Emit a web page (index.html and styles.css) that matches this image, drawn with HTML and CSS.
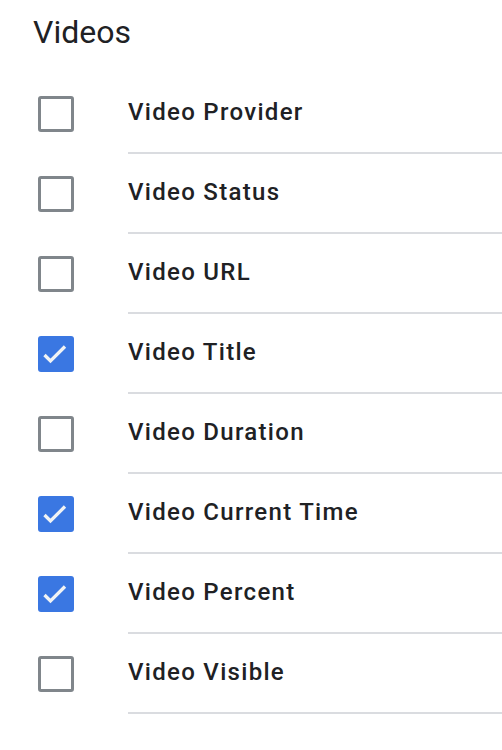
FILE: index.html
```html
<!DOCTYPE html>
<html>
<head>
<meta charset="utf-8">
<link rel="stylesheet" href="styles.css">
</head>
<body>
<div class="panel">
  <h2 class="title">Videos</h2>
  <ul class="list">
    <li class="row"><span class="cb-cell"><span class="cb"></span></span><span class="label">Video Provider</span></li>
    <li class="row"><span class="cb-cell"><span class="cb"></span></span><span class="label">Video Status</span></li>
    <li class="row"><span class="cb-cell"><span class="cb"></span></span><span class="label">Video URL</span></li>
    <li class="row"><span class="cb-cell"><span class="cb checked"><svg viewBox="0 0 36 36" width="36" height="36"><polyline points="6.5,19 12.5,25 27,10.5" fill="none" stroke="#f1f3f4" stroke-width="3.3"/></svg></span></span><span class="label">Video Title</span></li>
    <li class="row"><span class="cb-cell"><span class="cb"></span></span><span class="label">Video Duration</span></li>
    <li class="row"><span class="cb-cell"><span class="cb checked"><svg viewBox="0 0 36 36" width="36" height="36"><polyline points="6.5,19 12.5,25 27,10.5" fill="none" stroke="#f1f3f4" stroke-width="3.3"/></svg></span></span><span class="label">Video Current Time</span></li>
    <li class="row"><span class="cb-cell"><span class="cb checked"><svg viewBox="0 0 36 36" width="36" height="36"><polyline points="6.5,19 12.5,25 27,10.5" fill="none" stroke="#f1f3f4" stroke-width="3.3"/></svg></span></span><span class="label">Video Percent</span></li>
    <li class="row"><span class="cb-cell"><span class="cb"></span></span><span class="label">Video Visible</span></li>
  </ul>
</div>
</body>
</html>
```
FILE: styles.css
```css
html, body {
  margin: 0;
  padding: 0;
  background: #ffffff;
}
.panel {
  font-family: Roboto, "Liberation Sans", Arial, sans-serif;
  color: #202124;
}
.title {
  margin: 0;
  padding: 12px 0 22px 33px;
  font-size: 32px;
  line-height: 40px;
  font-weight: 400;
}
.list {
  list-style: none;
  margin: 0;
  padding: 0;
}
.row {
  display: flex;
  height: 80px;
}
.cb-cell {
  width: 128px;
  flex: none;
  display: flex;
  align-items: center;
  padding-left: 38px;
  box-sizing: border-box;
}
.cb {
  width: 36px;
  height: 36px;
  box-sizing: border-box;
  border: 3px solid #80868b;
  border-radius: 3px;
  display: block;
}
.cb.checked {
  border: none;
  background: #3a77e2;
}
.cb svg {
  display: block;
}
.label {
  flex: 1;
  display: flex;
  align-items: center;
  border-bottom: 2px solid #dadce0;
  font-size: 24px;
  font-weight: 500;
  letter-spacing: 1.3px;
  padding-bottom: 2px;
}
```
